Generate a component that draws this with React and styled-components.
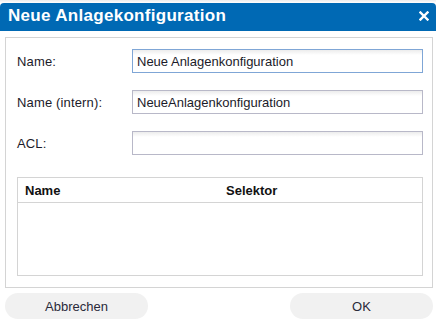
import React from 'react';
import styled, { createGlobalStyle } from 'styled-components';

const GlobalStyle = createGlobalStyle`
  html, body {
    margin: 0;
    padding: 0;
    background: #ffffff;
  }
  body {
    font-family: "Liberation Sans", Arial, sans-serif;
    font-size: 13px;
    color: #1b1b2a;
  }
`;

const StyledDialog = styled.div`
  width: 436px;
  height: 323px;
  padding-top: 3px;
  box-sizing: border-box;
  background: linear-gradient(#ececec, #ffffff 3px);
  display: flex;
  flex-direction: column;
`;

const StyledTitleBar = styled.div`
  height: 28px;
  background: #0069b4;
  border-radius: 4px 4px 0 0;
  display: flex;
  align-items: center;
  justify-content: space-between;
  padding: 0 7px 2px 8px;
  box-sizing: border-box;
`;

const StyledTitle = styled.h1`
  margin: 0;
  font-size: 17px;
  font-weight: bold;
  letter-spacing: 0.3px;
  color: #ffffff;
`;

const StyledClose = styled.button`
  border: 0;
  padding: 0;
  background: none;
  width: 10px;
  height: 10px;
  display: flex;
  cursor: pointer;
`;

const StyledBody = styled.div`
  padding: 6px 3px 0 5px;
  display: flex;
  flex-direction: column;
`;

const StyledPanel = styled.div`
  border: 1px solid #d4d4d4;
  padding: 11px 9px 11px 11px;
  display: flex;
  flex-direction: column;
  height: 251px;
  box-sizing: border-box;
`;

const StyledRow = styled.div`
  display: flex;
  align-items: center;
  height: 24px;
  margin-bottom: ${({ gap }) => gap}px;
`;

const StyledLabel = styled.label`
  width: 115px;
  flex-shrink: 0;
  letter-spacing: 0.15px;
`;

const StyledInput = styled.input`
  flex: 1;
  height: 24px;
  box-sizing: border-box;
  border: 1px solid ${({ focused }) => (focused ? '#7fa6d6' : '#b8b8c8')};
  background: linear-gradient(#ececec, #ffffff 5px);
  padding: 0 4px;
  font-family: "Liberation Sans", Arial, sans-serif;
  font-size: 13px;
  color: #1b1b2a;
  outline: none;
`;

const StyledTable = styled.div`
  border: 1px solid #d4d4d4;
  flex: 1;
  display: flex;
  flex-direction: column;
`;

const StyledTableHead = styled.div`
  display: grid;
  grid-template-columns: 201px 1fr;
  height: 24px;
  align-items: center;
  border-bottom: 1px solid #d4d4d4;
  padding-left: 7px;
  font-weight: bold;
  color: #111111;
`;

const StyledFooter = styled.div`
  display: flex;
  justify-content: space-between;
  padding-top: 5px;
`;

const StyledButton = styled.button`
  width: 143px;
  height: 26px;
  border: 0;
  border-radius: 13px;
  background: #f1f1f1;
  font-family: "Liberation Sans", Arial, sans-serif;
  font-size: 13px;
  color: #2a2a3a;
  cursor: pointer;
`;

const App = () => (
  <>
    <GlobalStyle />
    <StyledDialog>
      <StyledTitleBar>
        <StyledTitle>Neue Anlagekonfiguration</StyledTitle>
        <StyledClose aria-label="Schließen">
          <svg width="10" height="10" viewBox="0 0 10 10">
            <path d="M1.5 1.5 L8.5 8.5 M8.5 1.5 L1.5 8.5" stroke="#ffffff" strokeWidth="2.4" strokeLinecap="square" />
          </svg>
        </StyledClose>
      </StyledTitleBar>
      <StyledBody>
        <StyledPanel>
          <StyledRow gap={17}>
            <StyledLabel>Name:</StyledLabel>
            <StyledInput focused defaultValue="Neue Anlagenkonfiguration" />
          </StyledRow>
          <StyledRow gap={17}>
            <StyledLabel>Name (intern):</StyledLabel>
            <StyledInput defaultValue="NeueAnlagenkonfiguration" />
          </StyledRow>
          <StyledRow gap={22}>
            <StyledLabel>ACL:</StyledLabel>
            <StyledInput defaultValue="" />
          </StyledRow>
          <StyledTable>
            <StyledTableHead>
              <span>Name</span>
              <span>Selektor</span>
            </StyledTableHead>
          </StyledTable>
        </StyledPanel>
        <StyledFooter>
          <StyledButton>Abbrechen</StyledButton>
          <StyledButton>OK</StyledButton>
        </StyledFooter>
      </StyledBody>
    </StyledDialog>
  </>
);

export default App;
